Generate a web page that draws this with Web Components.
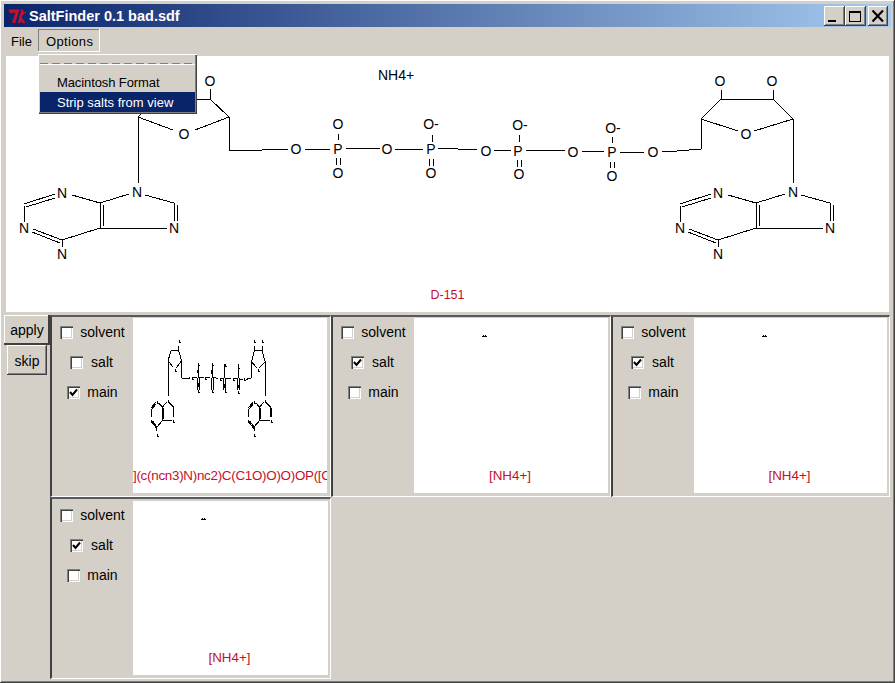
<!DOCTYPE html>
<html>
<head>
<meta charset="utf-8">
<title>SaltFinder 0.1 bad.sdf</title>
<style>
html, body { margin: 0; padding: 0; background: #d4d0c8; }
body { font: 14px "Liberation Sans", Arial, sans-serif; color: #000; }
</style>
</head>
<body>
<tk-window>
    <tk-titlebar slot="title">SaltFinder 0.1 bad.sdf</tk-titlebar>
    <tk-menubar slot="menu">
        <tk-menu label="File" style="width:34px"></tk-menu>
        <tk-menu label="Options" style="width:62px" open>
            <tk-menuitem style="letter-spacing:-.1px">Macintosh Format</tk-menuitem>
            <tk-menuitem active>Strip salts from view</tk-menuitem>
        </tk-menu>
    </tk-menubar>
    <mol-view slot="main" note="NH4+">D-151</mol-view>
    <tk-button slot="side" wide>apply</tk-button>
    <tk-button slot="side">skip</tk-button>
    <salt-card slot="cards" checked="main" style="--pad-r:3px;--smiles-align:flex-start;--smiles-shift:0"><mol-thumb kind="full"></mol-thumb><span slot="smiles" style="letter-spacing:-.28px">](c(ncn3)N)nc2)C(C1O)O)O)OP([O</span></salt-card>
    <salt-card slot="cards" checked="salt"><mol-thumb kind="salt" x="68" y="18"></mol-thumb><span slot="smiles">[NH4+]</span></salt-card>
    <salt-card slot="cards" checked="salt"><mol-thumb kind="salt" x="68" y="18"></mol-thumb><span slot="smiles">[NH4+]</span></salt-card>
    <salt-card slot="cards" checked="salt" style="--pad-t:2px"><mol-thumb kind="salt" x="68" y="18"></mol-thumb><span slot="smiles">[NH4+]</span></salt-card>
</tk-window>

<script>
const RAISED = 'inset -1px -1px #404040, inset 1px 1px #fff, inset -2px -2px #808080';

// Molecule drawing, page coordinates of the big canvas
const PURINE = [
    [24,204,55,194],[26,207,55,198],[24,206,24,222],[33,229,62,240],[32,232,60,243],
    [62,240,62,247],[62,240,100,228],[72,195,100,203],[100,203,100,228],[103,205,103,226],
    [100,203,129,194],[145,195,174,203],[174,203,174,221],[177,205,177,221],[100,228,167,228]
];
const PURINE_ATOMS = [[62,193,'N'],[24,228,'N'],[62,254,'N'],[137,192,'N'],[174,228,'N']];

const BONDS = [
    // left sugar
    [210,89,210,99],[157,99,210,99],[210,99,229,117],[138,117,157,99],[138,117,173,130],[195,130,229,117],
    [138,117,138,183],[229,117,229,150],[229,150,262,150],[262,150,288,149],
    // phosphate chain
    [305,149,330,149],[346,148,363,148],[363,148,380,149],[395,149,423,149],
    [438,148,458,149],[458,149,477,150],[494,150,511,150],[526,150,547,150],[547,150,565,151],
    [582,151,604,151],[620,152,644,152],[662,152,677,151],[677,151,701,149],
    [338,134,338,140],[336,158,336,165],[340,158,340,165],
    [432,135,432,142],[429,159,429,166],[433,159,433,166],
    [519,135,519,142],[517,160,517,167],[521,160,521,167],
    [612,137,612,143],[610,162,610,168],[614,162,614,168],
    // right sugar
    [701,149,701,119],[701,119,721,99],[721,99,773,99],[773,99,793,119],[701,119,738,131],[754,131,793,119],
    [721,90,721,99],[773,90,773,99],[793,119,793,183]
].concat(PURINE, PURINE.map(b => [b[0] + 656, b[1], b[2] + 656, b[3]]));

const ATOMS = [
    [210,81,'O'],[184,134,'O'],[296,149,'O'],[338,149,'P'],[338,124,'O'],[338,173,'O'],
    [387,149,'O'],[431,149,'P'],[431,124,'O-'],[431,173,'O'],
    [486,151,'O'],[518,151,'P'],[520,125,'O-'],[519,174,'O'],
    [573,152,'O'],[612,152,'P'],[613,128,'O-'],[612,176,'O'],[653,152,'O'],
    [720,81,'O'],[772,81,'O'],[746,134,'O']
].concat(PURINE_ATOMS, PURINE_ATOMS.map(a => [a[0] + 656, a[1], a[2]]));

function bondLines(scaleX, scaleY, dx, dy) {
    return BONDS.map(([x1, y1, x2, y2]) =>
        `<line x1="${(x1 * scaleX + dx).toFixed(1)}" y1="${(y1 * scaleY + dy).toFixed(1)}" x2="${(x2 * scaleX + dx).toFixed(1)}" y2="${(y2 * scaleY + dy).toFixed(1)}"/>`
    ).join('');
}

class TkWindow extends HTMLElement {
    constructor() {
        super();
        this.attachShadow({ mode: 'open' });
        this.shadowRoot.innerHTML = `
            <style>
                :host {
                    display: flex;
                    flex-direction: column;
                    box-sizing: border-box;
                    width: 895px;
                    height: 683px;
                    padding: 4px 3px 2px 4px;
                    background: #d4d0c8;
                    border-right: 1px solid #404040;
                    border-bottom: 1px solid #404040;
                    box-shadow: inset 1px 1px #fff, inset -1px -1px #808080;
                    overflow: hidden;
                }
                .body { display: flex; margin-top: 3px; }
                .side { display: flex; flex-direction: column; align-items: center; width: 46px; }
                .cards {
                    display: grid;
                    grid-template-columns: 281px 280px 279px;
                    grid-template-rows: 182px 182px;
                }
            </style>
            <slot name="title"></slot>
            <slot name="menu"></slot>
            <slot name="main"></slot>
            <div class="body">
                <div class="side"><slot name="side"></slot></div>
                <div class="cards"><slot name="cards"></slot></div>
            </div>
        `;
    }
}

class TkTitlebar extends HTMLElement {
    constructor() {
        super();
        this.attachShadow({ mode: 'open' });
        this.shadowRoot.innerHTML = `
            <style>
                :host {
                    display: flex;
                    align-items: center;
                    height: 23px;
                    background: linear-gradient(to right, #0a246a, #a6caf0);
                    color: #fff;
                    font-weight: bold;
                    font-size: 14.500px;
                }
                .logo { margin: 1px 2px 0 3px; flex: none; }
                .text { flex: 1; }
                .btns { display: flex; margin-right: 3px; }
                button {
                    all: unset;
                    display: flex;
                    width: 21px;
                    height: 20px;
                    background: #d4d0c8;
                    box-shadow: ${RAISED};
                }
                button + button + button { margin-left: 2px; width: 20px; }
            </style>
            <svg class="logo" width="20" height="16" viewBox="0 0 20 16" fill="#c8102e">
                <path d="M1.500 1.500H12.500L8 15H5L8.500 4.500L3 5.500Z"/>
                <path d="M14.500 1L16.500 2L13.500 15L11 15Z"/>
                <path d="M19.500 4L14 8.500L18.500 15H15.500L12 9L16 4Z"/>
            </svg>
            <span class="text"><slot></slot></span>
            <div class="btns">
                <button><svg width="21" height="20"><rect x="4" y="14" width="8" height="2"/></svg></button>
                <button><svg width="21" height="20"><path d="M4 5H16V16H4Z M5 7V15H15V7Z" fill-rule="evenodd"/></svg></button>
                <button><svg width="20" height="20"><path d="M4.500 4.500L15 15.500M15 4.500L4.500 15.500" stroke="#000" stroke-width="2.200" fill="none"/></svg></button>
            </div>
        `;
    }
}

class TkMenubar extends HTMLElement {
    constructor() {
        super();
        this.attachShadow({ mode: 'open' });
        this.shadowRoot.innerHTML = `
            <style>
                :host { display: flex; box-sizing: border-box; height: 29px; padding-top: 2px; font-size: 13px; }
            </style>
            <slot></slot>
        `;
    }
}

class TkMenu extends HTMLElement {
    constructor() {
        super();
        this.attachShadow({ mode: 'open' });
        const open = this.hasAttribute('open');
        this.shadowRoot.innerHTML = `
            <style>
                :host { display: block; position: relative; z-index: 5; flex: none; }
                .label {
                    display: flex;
                    align-items: center;
                    box-sizing: border-box;
                    height: 23px;
                    padding: ${open ? '2px 8px 0' : '1px 7px 0'};
                    ${open ? 'letter-spacing: .35px;' : ''}
                    box-shadow: ${open ? 'inset -1px -1px #fff, inset 1px 1px #808080' : 'none'};
                }
                .drop {
                    position: absolute;
                    left: 0;
                    top: 25px;
                    box-sizing: border-box;
                    width: 159px;
                    height: 60px;
                    padding: 2px;
                    background: #d4d0c8;
                    box-shadow: inset 1px 1px #fff, inset -1px -1px #404040, inset -2px -2px #808080;
                }
                .tear {
                    height: 1px;
                    margin: 7px 0 7px;
                    background: repeating-linear-gradient(to right, #808080 0 8px, transparent 8px 12px);
                    border-bottom: 1px solid #fff;
                }
            </style>
            <div class="label">${this.getAttribute('label')}</div>
            ${open ? '<div class="drop"><div class="tear"></div><div class="items"><slot></slot></div></div>' : ''}
        `;
    }
}

class TkMenuitem extends HTMLElement {
    constructor() {
        super();
        this.attachShadow({ mode: 'open' });
        this.shadowRoot.innerHTML = `
            <style>
                :host {
                    display: flex;
                    align-items: center;
                    height: 20px;
                    padding-left: 17px;
                    width: 138px;
                    white-space: nowrap;
                }
                :host([active]) { background: #0a246a; color: #fff; }
            </style>
            <slot></slot>
        `;
    }
}

class MolView extends HTMLElement {
    constructor() {
        super();
        this.attachShadow({ mode: 'open' });
        const labels = ATOMS.map(([x, y, t]) => `<text x="${x}" y="${y + 5}">${t}</text>`).join('');
        this.shadowRoot.innerHTML = `
            <style>
                :host {
                    display: block;
                    position: relative;
                    box-sizing: border-box;
                    height: 256px;
                    margin: 0 2px;
                    background: #fff;
                }
                svg { position: absolute; left: -6px; top: -56px; width: 895px; height: 320px; }
                line { stroke: #000; stroke-width: 1; shape-rendering: crispEdges; }
                text { font: 14px "Liberation Sans", Arial, sans-serif; text-anchor: middle; }
                .name {
                    position: absolute;
                    left: 0;
                    right: 0;
                    bottom: 10px;
                    text-align: center;
                    color: #c41028;
                    font-size: 12.500px;
                }
            </style>
            <svg viewBox="0 0 895 320">
                <g>${bondLines(1, 1, 0, 0)}</g>
                <g>${labels}</g>
                <text x="396" y="80">${this.getAttribute('note')}</text>
            </svg>
            <div class="name"><slot></slot></div>
        `;
    }
}

class MolThumb extends HTMLElement {
    constructor() {
        super();
        this.attachShadow({ mode: 'open' });
        const sx = 0.148;
        const sy = 0.54;
        const dx = 35 - 137 * sx;
        const dy = 82 - 190 * sy;
        let body;
        if (this.getAttribute('kind') === 'full') {
            const marks = ATOMS.map(([x, y, t]) => {
                const px = Math.round(x * sx + dx);
                const py = Math.round(y * sy + dy);
                if (t === 'P') {
                    // phosphate: stem above, double bond below
                    return `<rect x="${px}" y="46" width="1" height="14"/>
                        <rect x="${px - 1}" y="60" width="1" height="12"/><rect x="${px + 1}" y="60" width="1" height="12"/>`;
                }
                return `<rect x="${px}" y="${py - 1}" width="1" height="3"/><rect x="${px + 1}" y="${py + 1}" width="1" height="1"/>`;
            }).join('');
            body = `<svg width="194" height="175"><g>${bondLines(sx, sy, dx, dy)}</g>${marks}</svg>`;
        } else {
            const x = +this.getAttribute('x');
            const y = +this.getAttribute('y');
            body = `<svg width="194" height="175">
                <rect x="${x + 1}" y="${y - 1}" width="1" height="1"/><rect x="${x + 3}" y="${y - 1}" width="1" height="1"/>
                <rect x="${x}" y="${y}" width="5" height="1"/>
            </svg>`;
        }
        this.shadowRoot.innerHTML = `
            <style>
                :host { display: block; }
                svg { display: block; }
                line { stroke: #000; stroke-width: 1; shape-rendering: crispEdges; }
            </style>
            ${body}
        `;
    }
}

class TkCheck extends HTMLElement {
    constructor() {
        super();
        this.attachShadow({ mode: 'open' });
        const tick = this.hasAttribute('checked')
            ? '<svg width="13" height="13"><path d="M3 6L5.500 9L10 3.500" fill="none" stroke="#000" stroke-width="2"/></svg>'
            : '';
        this.shadowRoot.innerHTML = `
            <style>
                :host { display: flex; align-items: center; justify-content: center; height: 30px; gap: var(--gap, 7px); }
                .box {
                    width: 13px;
                    height: 13px;
                    flex: none;
                    background: #fff;
                    box-shadow: inset 1px 1px #808080, inset 2px 2px #404040, inset -1px -1px #fff, inset -2px -2px #d4d0c8;
                }
                svg { display: block; }
            </style>
            <div class="box">${tick}</div>
            <span><slot></slot></span>
        `;
    }
}

class SaltCard extends HTMLElement {
    constructor() {
        super();
        this.attachShadow({ mode: 'open' });
        const checked = this.getAttribute('checked');
        const rows = ['solvent', 'salt', 'main'].map(name =>
            `<tk-check ${name === checked ? 'checked' : ''} ${name === 'salt' ? 'style="--gap:8px;padding-right:2px"' : ''}>${name}</tk-check>`
        ).join('');
        this.shadowRoot.innerHTML = `
            <style>
                :host {
                    display: flex;
                    box-sizing: border-box;
                    padding: var(--pad-t, 1px) var(--pad-r, 2px) 3px 0;
                    border-left: 2px solid #404040;
                    border-top: 2px solid #5a5a5a;
                    border-right: 1px solid #fff;
                    border-bottom: 1px solid #fff;
                    min-width: 0;
                }
                .checks { flex: none; width: 81px; margin-top: -1px; }
                .draw {
                    position: relative;
                    flex: 1;
                    min-width: 0;
                    background: #fff;
                    overflow: hidden;
                }
                .smiles {
                    position: absolute;
                    left: 0;
                    right: var(--smiles-shift, 2px);
                    bottom: 10px;
                    display: flex;
                    justify-content: var(--smiles-align, center);
                    white-space: nowrap;
                    color: #c41028;
                    font-size: 13.400px;
                }
            </style>
            <div class="checks">${rows}</div>
            <div class="draw">
                <slot></slot>
                <div class="smiles"><slot name="smiles"></slot></div>
            </div>
        `;
    }
}

class TkButton extends HTMLElement {
    constructor() {
        super();
        this.attachShadow({ mode: 'open' });
        this.shadowRoot.innerHTML = `
            <style>
                :host {
                    display: flex;
                    align-items: center;
                    justify-content: center;
                    box-sizing: border-box;
                    width: 40px;
                    height: 30px;
                    padding-top: 1px;
                    background: #d4d0c8;
                    box-shadow: ${RAISED};
                }
                :host([wide]) { width: 46px; height: 30px; padding: 0 0 1px; box-shadow: inset -2px -2px #404040, inset 1px 1px #fff; }
            </style>
            <slot></slot>
        `;
    }
}

customElements.define('tk-check', TkCheck);
customElements.define('tk-menuitem', TkMenuitem);
customElements.define('tk-menu', TkMenu);
customElements.define('tk-menubar', TkMenubar);
customElements.define('tk-titlebar', TkTitlebar);
customElements.define('tk-button', TkButton);
customElements.define('mol-view', MolView);
customElements.define('mol-thumb', MolThumb);
customElements.define('salt-card', SaltCard);
customElements.define('tk-window', TkWindow);
</script>
</body>
</html>
